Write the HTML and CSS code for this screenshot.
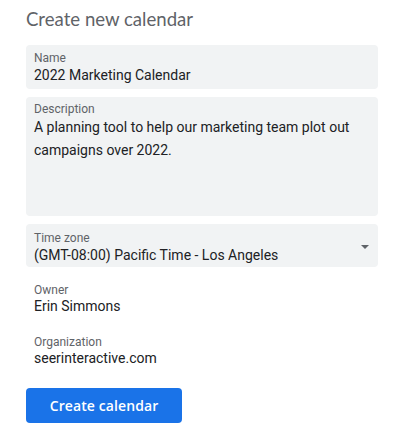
FILE: index.html
```html
<!DOCTYPE html>
<html>
<head>
<meta charset="utf-8">
<link rel="stylesheet" href="styles.css">
</head>
<body>
<div class="page">
  <h1 class="title">Create new calendar</h1>
  <div class="field">
    <div class="label">Name</div>
    <div class="value">2022 Marketing Calendar</div>
  </div>
  <div class="field field-desc">
    <div class="label label-tight">Description</div>
    <div class="value value-multi">A planning tool to help our marketing team plot out campaigns over 2022.</div>
  </div>
  <div class="field field-select">
    <div class="select-text">
      <div class="label">Time zone</div>
      <div class="value">(GMT-08:00) Pacific Time - Los Angeles</div>
    </div>
    <svg class="arrow" width="8" height="4" viewBox="0 0 8 4"><path d="M0 0 L8 0 L4 4 Z" fill="#5f6368"/></svg>
  </div>
  <div class="info">
    <div class="label label-tight">Owner</div>
    <div class="value">Erin Simmons</div>
  </div>
  <div class="info info-org">
    <div class="label label-tight">Organization</div>
    <div class="value">seerinteractive.com</div>
  </div>
  <button class="btn">Create calendar</button>
</div>
</body>
</html>
```

FILE: styles.css
```css
* { box-sizing: border-box; }
html, body { margin: 0; padding: 0; background: #fff; }
body { font-family: Roboto, "Liberation Sans", sans-serif; color: #202124; }
.page {
  width: 352px;
  margin-left: 26px;
  padding-top: 6px;
  display: flex;
  flex-direction: column;
}
.title {
  margin: 0;
  font-family: Lato, "Open Sans", Roboto, sans-serif;
  font-weight: 400;
  font-size: 18.6px;
  line-height: 26px;
  color: #5f6368;
  height: 39px;
}
.field {
  background: #f1f3f4;
  border-radius: 4px;
  padding: 5px 8px;
  margin-bottom: 8px;
}
.label {
  font-size: 12px;
  line-height: 16px;
  color: #5f6368;
}
.label-tight { line-height: 14px; }
.value {
  font-size: 14px;
  line-height: 18px;
  color: #202124;
}
.field-desc {
  height: 119px;
  padding-top: 5px;
}
.value-multi { line-height: 23px; }
.field-select {
  display: flex;
  align-items: center;
  justify-content: space-between;
  padding: 6px 8px 3px 8px;
  height: 43px;
}
.arrow { margin-right: 1px; margin-top: 0; }
.info {
  padding-left: 8px;
  margin-top: 8px;
}
.info-org { margin-top: 20px; }
.btn {
  margin-top: 21px;
  width: 156px;
  height: 35px;
  border: none;
  border-radius: 4px;
  background: #1a73e8;
  color: #fff;
  font-family: "Open Sans", Roboto, sans-serif;
  font-weight: 600;
  font-size: 14px;
  letter-spacing: 0.1px;
  padding: 0;
}
```
